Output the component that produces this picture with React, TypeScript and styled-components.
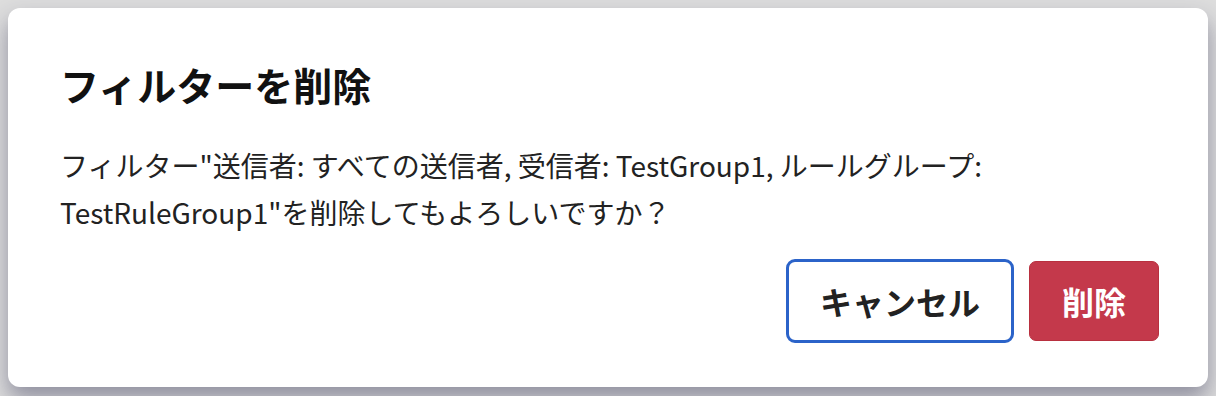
import styled, { createGlobalStyle } from 'styled-components';

const GlobalStyle = createGlobalStyle`
  html, body {
    margin: 0;
    padding: 0;
    background: #dddddd;
    font-family: 'Noto Sans CJK JP', 'Noto Sans', sans-serif;
  }
`;

const Backdrop = styled.div`
  padding: 8px 8px 10px 8px;
`;

const Dialog = styled.div`
  background: #ffffff;
  border-radius: 12px;
  box-shadow: 0 12px 22px rgba(50, 50, 85, 0.45);
  padding: 51px 49px 44px 52px;
`;

const Title = styled.h2`
  margin: 0;
  font-size: 39px;
  line-height: 1.3;
  font-weight: 700;
  color: #111111;
`;

const Message = styled.p`
  margin: 32px 0 0;
  font-size: 28px;
  line-height: 47px;
  color: #222222;
`;

const Actions = styled.div`
  margin-top: 23px;
  display: flex;
  justify-content: flex-end;
  align-items: center;
  gap: 15px;
`;

const Button = styled.button<{ $variant: 'secondary' | 'danger' }>`
  font-family: inherit;
  font-size: 32px;
  font-weight: 700;
  cursor: pointer;
  ${({ $variant }) =>
    $variant === 'danger'
      ? `
    height: 80px;
    padding: 0 32px;
    background: #c4394b;
    color: #ffffff;
    border: 1px solid #b8303f;
    border-radius: 7px;
  `
      : `
    height: 84px;
    padding: 0 31px;
    background: #ffffff;
    color: #222222;
    border: 3px solid #2b63c9;
    border-radius: 9px;
  `}
`;

export default function App() {
  return (
    <>
      <GlobalStyle />
      <Backdrop>
        <Dialog role='dialog'>
          <Title>フィルターを削除</Title>
          <Message>
            フィルター"送信者: すべての送信者, 受信者: TestGroup1, ルールグループ:
            <br />
            TestRuleGroup1"を削除してもよろしいですか？
          </Message>
          <Actions>
            <Button $variant='secondary'>キャンセル</Button>
            <Button $variant='danger'>削除</Button>
          </Actions>
        </Dialog>
      </Backdrop>
    </>
  );
}
